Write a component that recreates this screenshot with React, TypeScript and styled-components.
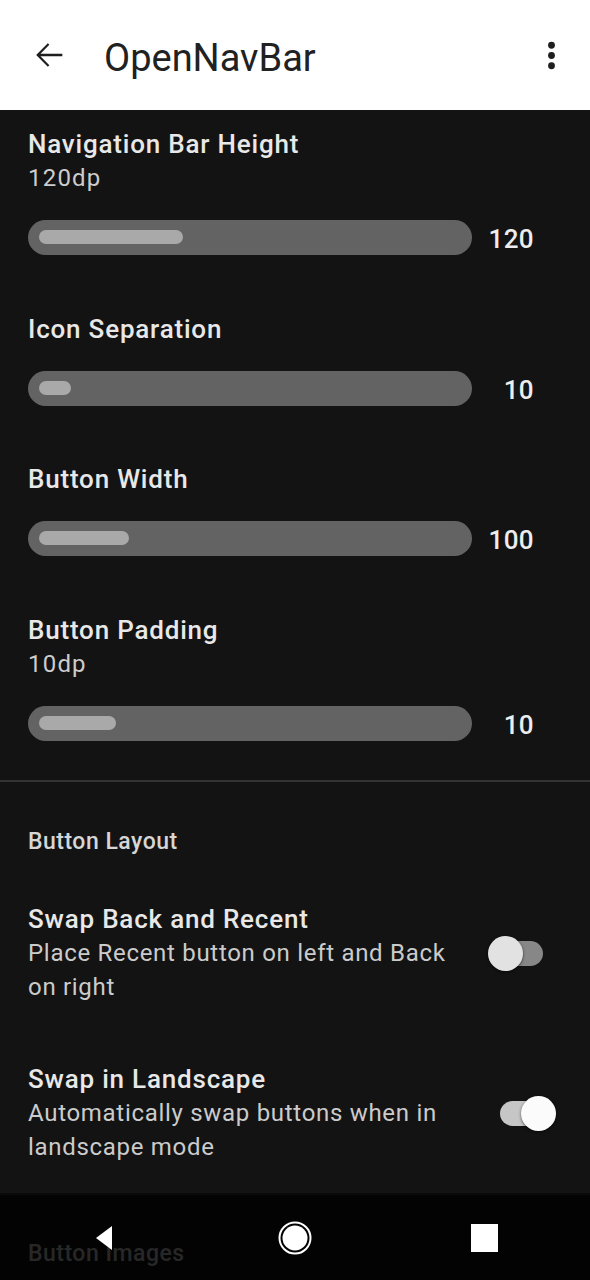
import React from "react";
import styled, { createGlobalStyle } from "styled-components";

const GlobalStyle = createGlobalStyle`
  html, body {
    margin: 0;
    padding: 0;
    background: #131313;
    font-family: Roboto, "Noto Sans", "Liberation Sans", sans-serif;
  }
  * { box-sizing: border-box; }
`;

const Page = styled.div`
  width: 590px;
  min-height: 1280px;
  background: #131313;
  display: flex;
  flex-direction: column;
`;

const AppBar = styled.header`
  height: 110px;
  background: #ffffff;
  display: flex;
  align-items: center;
  padding: 0 18px 0 28px;
  flex-shrink: 0;
`;

const IconButton = styled.div`
  width: 41px;
  height: 41px;
  display: flex;
  align-items: center;
  justify-content: center;
  color: #1f1f1f;
`;

const Title = styled.h1`
  flex: 1;
  margin: 0 0 0 35px;
  padding-top: 5px;
  font-size: 38px;
  font-weight: 400;
  line-height: 1;
  color: #212121;
  letter-spacing: 0;
`;

const SliderItem = styled.section`
  padding: 17px 56px 39.5px 28px;
  display: flex;
  flex-direction: column;
`;

const ItemTitle = styled.div`
  font-size: 26px;
  font-weight: 500;
  line-height: 34px;
  letter-spacing: 0.8px;
  color: #e8e8e8;
`;

const ItemSub = styled.div`
  font-size: 24px;
  font-weight: 400;
  line-height: 34px;
  letter-spacing: 1.2px;
  color: #cdcdcd;
`;

const SliderRow = styled.div`
  margin-top: 25px;
  display: flex;
  align-items: center;
`;

const Track = styled.div`
  flex: 1;
  height: 35px;
  border-radius: 17.5px;
  background: #636363;
  padding: 10px 0 0 11px;
`;

const Fill = styled.div`
  height: 14px;
  border-radius: 7px;
  background: #a9a9a9;
`;

const Value = styled.div`
  width: 62px;
  text-align: right;
  font-size: 26px;
  font-weight: 500;
  line-height: 1;
  padding-top: 3px;
  letter-spacing: 0.4px;
  color: #ededed;
`;

const Divider = styled.div`
  height: 2px;
  background: #333333;
  flex-shrink: 0;
`;

const Category = styled.div`
  padding: 44.5px 28px 16px;
  font-size: 23px;
  font-weight: 500;
  line-height: 30px;
  letter-spacing: 0.5px;
  color: #d6d6d6;
`;

const PrefItem = styled.div`
  padding: 29px 0 29px 28px;
  display: flex;
  align-items: center;
`;

const PrefText = styled.div`
  width: 430px;
  display: flex;
  flex-direction: column;
`;

const Summary = styled.div`
  font-size: 24px;
  font-weight: 400;
  line-height: 34px;
  letter-spacing: 0.7px;
  color: #cbcbcb;
`;

const SwitchBox = styled.div<{ $offset: number }>`
  position: relative;
  margin-left: ${(p) => p.$offset}px;
  width: 50px;
  height: 25px;
  margin-top: 1px;
`;

const SwitchTrack = styled.div<{ $on: boolean }>`
  width: 50px;
  height: 25px;
  border-radius: 12.5px;
  background: ${(p) => (p.$on ? "#c6c6c6" : "#878787")};
`;

const SwitchThumb = styled.div<{ $on: boolean }>`
  position: absolute;
  top: -5px;
  left: ${(p) => (p.$on ? "21px" : "-5px")};
  width: 35px;
  height: 35px;
  border-radius: 50%;
  background: ${(p) => (p.$on ? "#fbfbfb" : "#e2e2e2")};
  box-shadow: 0 1px 3px rgba(0, 0, 0, 0.6);
`;

const NavBar = styled.nav`
  position: fixed;
  left: 0;
  right: 0;
  bottom: 0;
  height: 87px;
  background: rgba(0, 0, 0, 0.82);
  display: flex;
  align-items: center;
  justify-content: center;
  gap: 150px;
  padding-top: 3px;
`;

const NavButton = styled.div`
  width: 40px;
  height: 40px;
  display: flex;
  align-items: center;
  justify-content: center;
`;

const sliders = [
  { title: "Navigation Bar Height", sub: "120dp", value: "120", fill: 144 },
  { title: "Icon Separation", value: "10", fill: 32 },
  { title: "Button Width", value: "100", fill: 90 },
  { title: "Button Padding", sub: "10dp", value: "10", fill: 77 },
];

const prefs = [
  {
    title: "Swap Back and Recent",
    summary: "Place Recent button on left and Back on right",
    on: false,
    offset: 35,
  },
  {
    title: "Swap in Landscape",
    summary: "Automatically swap buttons when in landscape mode",
    on: true,
    offset: 42,
  },
];

export default function App() {
  return (
    <>
      <GlobalStyle />
      <Page>
        <AppBar>
          <IconButton>
            <svg width="40" height="40" viewBox="0 0 24 24" fill="currentColor">
              <path d="M20 11.2H6.9l5.3-5.3L11.3 5 4.3 12l7 7 .9-.9-5.3-5.3H20v-1.6z" />
            </svg>
          </IconButton>
          <Title>OpenNavBar</Title>
          <IconButton>
            <svg width="41" height="41" viewBox="0 0 24 24" fill="currentColor">
              <circle cx="12" cy="6" r="2" />
              <circle cx="12" cy="12" r="2" />
              <circle cx="12" cy="18" r="2" />
            </svg>
          </IconButton>
        </AppBar>

        {sliders.map((s) => (
          <SliderItem key={s.title}>
            <ItemTitle>{s.title}</ItemTitle>
            {s.sub && <ItemSub>{s.sub}</ItemSub>}
            <SliderRow>
              <Track>
                <Fill style={{ width: s.fill }} />
              </Track>
              <Value>{s.value}</Value>
            </SliderRow>
          </SliderItem>
        ))}

        <Divider />
        <Category>Button Layout</Category>

        {prefs.map((p) => (
          <PrefItem key={p.title}>
            <PrefText>
              <ItemTitle>{p.title}</ItemTitle>
              <Summary>{p.summary}</Summary>
            </PrefText>
            <SwitchBox $offset={p.offset}>
              <SwitchTrack $on={p.on} />
              <SwitchThumb $on={p.on} />
            </SwitchBox>
          </PrefItem>
        ))}

        <Divider />
        <Category>Button Images</Category>
      </Page>

      <NavBar>
        <NavButton>
          <svg width="20" height="26" viewBox="0 0 20 26">
            <polygon points="1,13 17,1 17,25" fill="#ffffff" />
          </svg>
        </NavButton>
        <NavButton>
          <svg width="36" height="36" viewBox="0 0 36 36">
            <circle cx="18" cy="18" r="15.5" fill="none" stroke="#ffffff" strokeWidth="2" />
            <circle cx="18" cy="18" r="12.5" fill="#ffffff" />
          </svg>
        </NavButton>
        <NavButton>
          <svg width="28" height="28" viewBox="0 0 28 28">
            <rect x="0" y="0" width="27" height="28" fill="#ffffff" />
          </svg>
        </NavButton>
      </NavBar>
    </>
  );
}
